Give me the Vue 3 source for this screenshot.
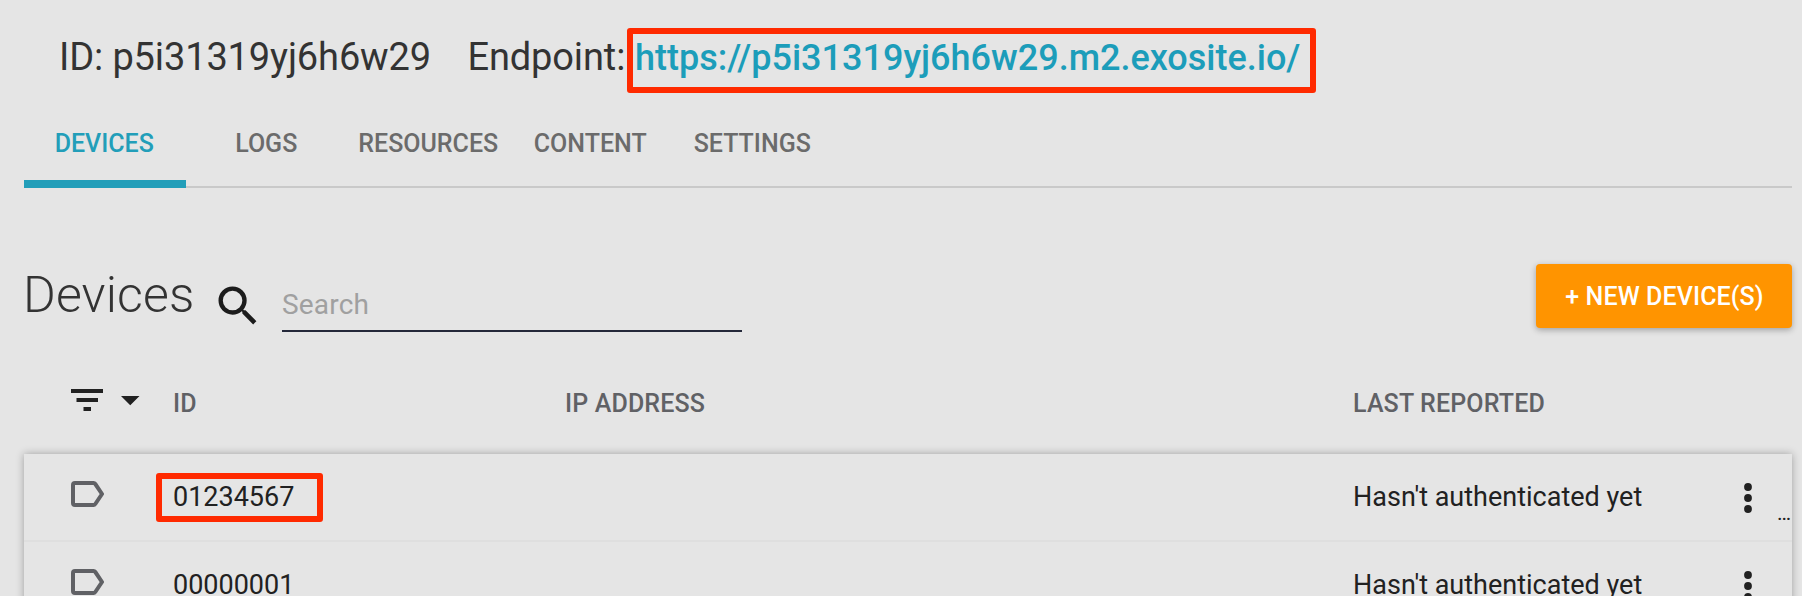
<script setup>
const tabs = ['Devices', 'Logs', 'Resources', 'Content', 'Settings']
const devices = [
  { id: '01234567', status: "Hasn't authenticated yet", marked: true },
  { id: '00000001', status: "Hasn't authenticated yet", marked: false },
]
</script>

<template>
  <div class="page">
    <header class="info">
      <span class="product">ID: p5i31319yj6h6w29</span>
      <span class="endpoint">Endpoint:</span>
      <a class="link">https://p5i31319yj6h6w29.m2.exosite.io/</a>
    </header>
    <nav class="tabs">
      <div v-for="(tab, i) in tabs" :key="tab" class="tab" :class="{ active: i === 0 }"><span>{{ tab }}</span></div>
    </nav>
    <section class="toolbar">
      <h1>Devices</h1>
      <svg class="search-icon" viewBox="0 0 24 24"><path d="M15.5 14h-.79l-.28-.27A6.47 6.47 0 0 0 16 9.5 6.5 6.5 0 1 0 9.5 16c1.61 0 3.09-.59 4.23-1.57l.27.28v.79l5 4.99L20.49 19l-4.99-5zm-6 0a4.5 4.5 0 1 1 0-9 4.5 4.5 0 0 1 0 9z" /></svg>
      <div class="search">Search</div>
      <button class="new">+ New Device(s)</button>
    </section>
    <div class="grid head">
      <div class="filter">
        <svg width="72" height="24" viewBox="0 0 72 24"><path d="M0 1h32v4H0zM5.5 10h21.5v4H5.500zM12.500 19h7.500v4h-7.500zM50 8h18.500l-9.250 9.200z" /></svg>
      </div>
      <div>ID</div>
      <div>IP Address</div>
      <div>Last Reported</div>
    </div>
    <div class="card">
      <div v-for="d in devices" :key="d.id" class="grid row">
        <svg class="label" width="33" height="26" viewBox="0 0 33 26"><path d="M4 2H22.500Q23.600 2 24.300 3L31 13L24.300 23Q23.600 24 22.500 24H4Q2 24 2 22V4Q2 2 4 2Z" /></svg>
        <div class="cell" :class="{ marked: d.marked }">{{ d.id }}</div>
        <div></div>
        <div class="status">{{ d.status }}</div>
        <svg class="dots" width="8" height="30" viewBox="0 0 8 30"><circle cx="4" cy="4" r="3.900" /><circle cx="4" cy="15" r="3.900" /><circle cx="4" cy="26" r="3.900" /></svg>
        <span v-if="d.marked" class="more">…</span>
      </div>
    </div>
  </div>
</template>

<style>
body { margin: 0; background: #e5e5e5; }
</style>
<style scoped>
.page { box-sizing: border-box; width: 1802px; height: 596px; padding: 0 10px 0 24px; overflow: hidden; background: #e5e5e5; color: #212121; font-family: Roboto, sans-serif; }
.info { display: flex; height: 93px; padding: 28px 0 0 35px; box-sizing: border-box; font-size: 38px; line-height: 58px; color: #333; white-space: nowrap; }
.product { width: 373px; letter-spacing: -0.13px; }
.endpoint { width: 159.500px; margin-left: 35.500px; letter-spacing: -0.13px; }
.link { box-sizing: border-box; width: 689px; height: 65px; padding-left: 2px; border: 6px solid #ff2a00; border-radius: 3px; color: #1c9dba; font-size: 36px; font-weight: 500; line-height: 48px; }
.tabs { display: flex; height: 95px; box-sizing: border-box; border-bottom: 2px solid #c9c9c9; text-transform: uppercase; font-size: 25px; font-weight: 500; color: #6b6b6b; }
.tab { box-sizing: border-box; width: 162px; height: 95px; padding-right: 1.500px; text-align: center; line-height: 102px; }
.active { color: #229eb9; border-bottom: 8px solid #229eb9; }
.toolbar { display: flex; height: 144px; padding-top: 76px; box-sizing: border-box; }
h1 { width: 170px; margin: 0 0 0 -1px; font-size: 50px; font-weight: 300; letter-spacing: 0.12px; line-height: 62px; color: #333; }
.search-icon { width: 52px; height: 52px; margin: 16px 18px 0 19px; fill: #1c1c1c; }
.search { box-sizing: border-box; width: 460px; height: 68px; border-bottom: 2px solid #24283a; font-size: 28px; letter-spacing: 0.2px; color: #a0a0a0; line-height: 81px; }
.new { margin: 0 0 0 auto; width: 256px; height: 64px; padding: 0 0 0 1px; border: 0; border-radius: 4px; background: #ff9400; color: #fff; text-transform: uppercase; font: 500 25px/63px Roboto, sans-serif; letter-spacing: 0.1px; box-shadow: 0 2px 6px rgba(0,0,0,.3); }
.grid { display: grid; grid-template-columns: 149px 392px 788px 391px 32px 16px; }
.head { height: 122px; padding-top: 56px; box-sizing: border-box; text-transform: uppercase; font-size: 25px; font-weight: 500; letter-spacing: 0.15px; color: #606165; line-height: 32px; }
.filter { padding-left: 47px; fill: #212121; }
.filter svg { display: block; }
.card { box-shadow: 0 0 8px rgba(0,0,0,.3); height: 300px; }
.row { height: 88px; box-sizing: border-box; border-bottom: 2px solid #dfdfdf; font-size: 27px; line-height: 86px; }
.label { margin: 27px 0 0 47px; fill: none; stroke: #606165; stroke-width: 4; }
.dots { margin-top: 29px; fill: #212121; }
.more { padding-left: 1px; font-size: 21px; line-height: 118px; height: 86px; }
.marked { position: relative; }
.marked::before { content: ''; position: absolute; left: -17px; top: 19px; width: 155px; height: 37px; border: 6px solid #ff2a00; border-radius: 3px; }
</style>
